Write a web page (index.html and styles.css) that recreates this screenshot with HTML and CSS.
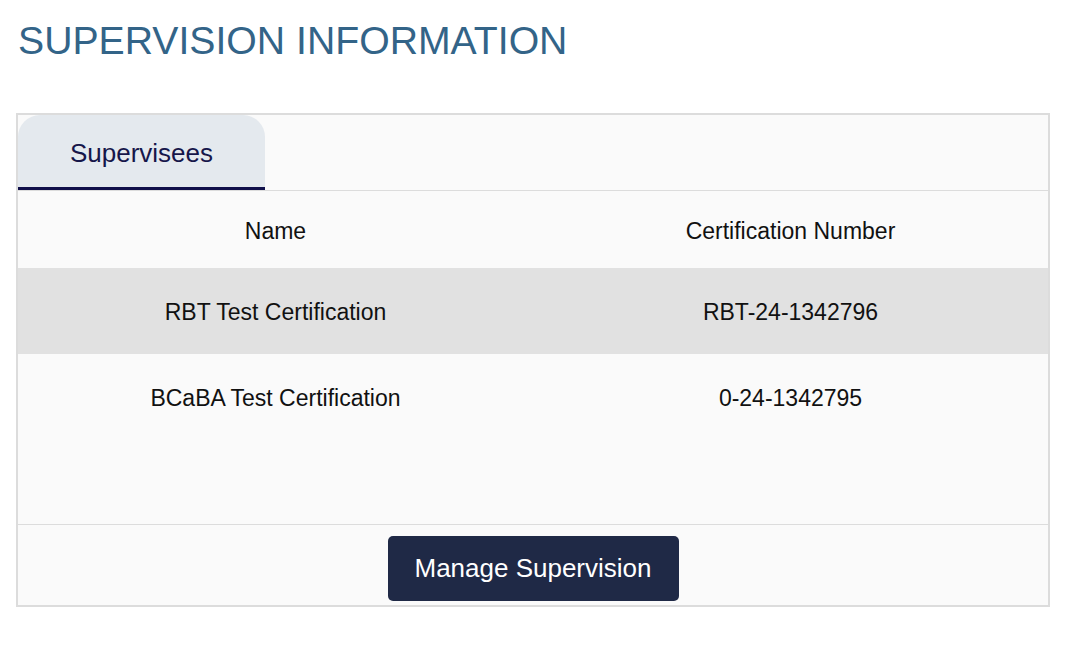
FILE: index.html
```html
<!DOCTYPE html>
<html lang="en">
<head>
  <meta charset="UTF-8">
  <meta name="viewport" content="width=device-width, initial-scale=1.0">
  <title>Supervision Information</title>
  <link rel="stylesheet" href="styles.css">
</head>
<body>
  <h1 class="page-title">SUPERVISION INFORMATION</h1>

  <div class="panel">
    <div class="tabs">
      <div class="tab active">Supervisees</div>
    </div>

    <div class="panel-body">
      <table class="grid">
        <thead>
          <tr>
            <th>Name</th>
            <th>Certification Number</th>
          </tr>
        </thead>
        <tbody>
          <tr class="striped">
            <td>RBT Test Certification</td>
            <td>RBT-24-1342796</td>
          </tr>
          <tr>
            <td>BCaBA Test Certification</td>
            <td>0-24-1342795</td>
          </tr>
        </tbody>
      </table>
    </div>

    <div class="panel-footer">
      <button type="button" class="btn">Manage Supervision</button>
    </div>
  </div>
</body>
</html>
```

FILE: styles.css
```css
body {
  font-family: "Liberation Sans", Arial, sans-serif;
  margin: 0;
  padding: 16px;
  background: #fff;
  color: #111;
}
.page-title {
  color: #336488;
  font-weight: normal;
  font-size: 39.2px;
  margin: 2px 0 0 2px;
  height: 95px;
  line-height: 46px;
}
.panel {
  width: 1030px;
  border: 2px solid #dcdcdc;
  background: #fafafa;
}
.tabs {
  display: flex;
  border-bottom: 1px solid #dcdcdc;
}
.tab {
  width: 247px;
  height: 72px;
  line-height: 76px;
  text-align: center;
  font-size: 26px;
  color: #16164a;
  background: #e4e9ee;
  border-radius: 22px 22px 0 0;
  border-bottom: 3px solid #10104a;
}
.panel-body {
  height: 333px;
  border-bottom: 1px solid #dcdcdc;
}
.grid {
  width: 100%;
  border-collapse: collapse;
  font-size: 23px;
}
.grid th,
.grid td {
  width: 50%;
  text-align: center;
  font-weight: normal;
  padding: 3px 0 0;
}
.grid thead tr {
  height: 77px;
}
.grid tbody tr {
  height: 86px;
}
.striped {
  background: #e1e1e1;
}
.panel-footer {
  height: 80px;
  display: flex;
  justify-content: center;
  padding-top: 11px;
  box-sizing: border-box;
}
.btn {
  background-color: #1f2946;
  color: #fff;
  border: none;
  border-radius: 5px;
  width: 291px;
  height: 65px;
  font-family: inherit;
  font-size: 26px;
  cursor: pointer;
}
```
